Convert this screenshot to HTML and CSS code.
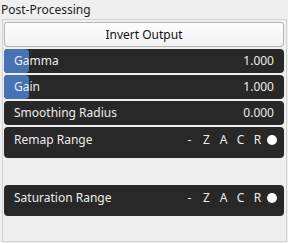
FILE: index.html
```html
<!DOCTYPE html>
<html lang="en">
<head>
    <meta charset="UTF-8">
    <title>Post-Processing</title>
    <link rel="stylesheet" href="styles.css">
</head>
<body>
    <p class="title">Post-Processing</p>
    <div class="panel">
        <div class="button">Invert Output</div>
        <div class="row">
            <span class="fill" style="width: 25px"></span>
            <span class="label">Gamma</span>
            <span class="value">1.000</span>
        </div>
        <div class="row">
            <span class="fill" style="width: 25px"></span>
            <span class="label">Gain</span>
            <span class="value">1.000</span>
        </div>
        <div class="row">
            <span class="label">Smoothing Radius</span>
            <span class="value">0.000</span>
        </div>
        <!-- range rows: label on the top line, flags on the right -->
        <div class="row range">
            <span class="label">Remap Range</span>
            <span class="flags">
                <span>-</span><span>Z</span><span>A</span><span>C</span><span>R</span>
                <i class="dot"></i>
            </span>
        </div>
        <div class="spacer"></div>
        <div class="row range">
            <span class="label">Saturation Range</span>
            <span class="flags">
                <span>-</span><span>Z</span><span>A</span><span>C</span><span>R</span>
                <i class="dot"></i>
            </span>
        </div>
    </div>
</body>
</html>
```

FILE: styles.css
```css
body {
    margin: 0;
    background-color: #efefef;
    font-family: "Noto Sans", sans-serif;
    font-size: 12px;
    color: #1e1e1e;
}
.title {
    margin: 0;
    padding: 1px 0 0 1px;
    height: 18px;
    line-height: 17px;
}
.panel {
    margin-left: 2px;
    width: 280px;
    height: 217px;
    border: 1px solid #d2d2d2;
    padding: 2px 2px 2px 1px;
    display: flex;
    flex-direction: column;
    gap: 2px;
}
.button {
    height: 23px;
    line-height: 23px;
    text-align: center;
    color: #111;
    border: 1px solid #b4b4b4;
    border-radius: 3px;
    background: linear-gradient(#fdfdfd, #f2f2f2);
}
.row {
    position: relative;
    display: flex;
    justify-content: space-between;
    height: 24px;
    line-height: 24px;
    padding: 0 10px;
    border-radius: 4px;
    background-color: #282828;
    color: #ececec;
}
.fill {
    position: absolute;
    left: 0;
    top: 0;
    bottom: 0;
    border-radius: 4px;
    background-color: #4872b6;
}
.label, .value {
    position: relative;
}
.range {
    height: 31px;
    line-height: 26px;
    padding-right: 7px;
}
.flags {
    display: flex;
    align-items: center;
    height: 26px;
}
.flags span {
    width: 17px;
    text-align: center;
    font-size: 12px;
}
.dot {
    width: 10px;
    height: 10px;
    margin-left: 1px;
    border-radius: 50%;
    background-color: #fff;
}
.spacer {
    height: 23px;
}
```
